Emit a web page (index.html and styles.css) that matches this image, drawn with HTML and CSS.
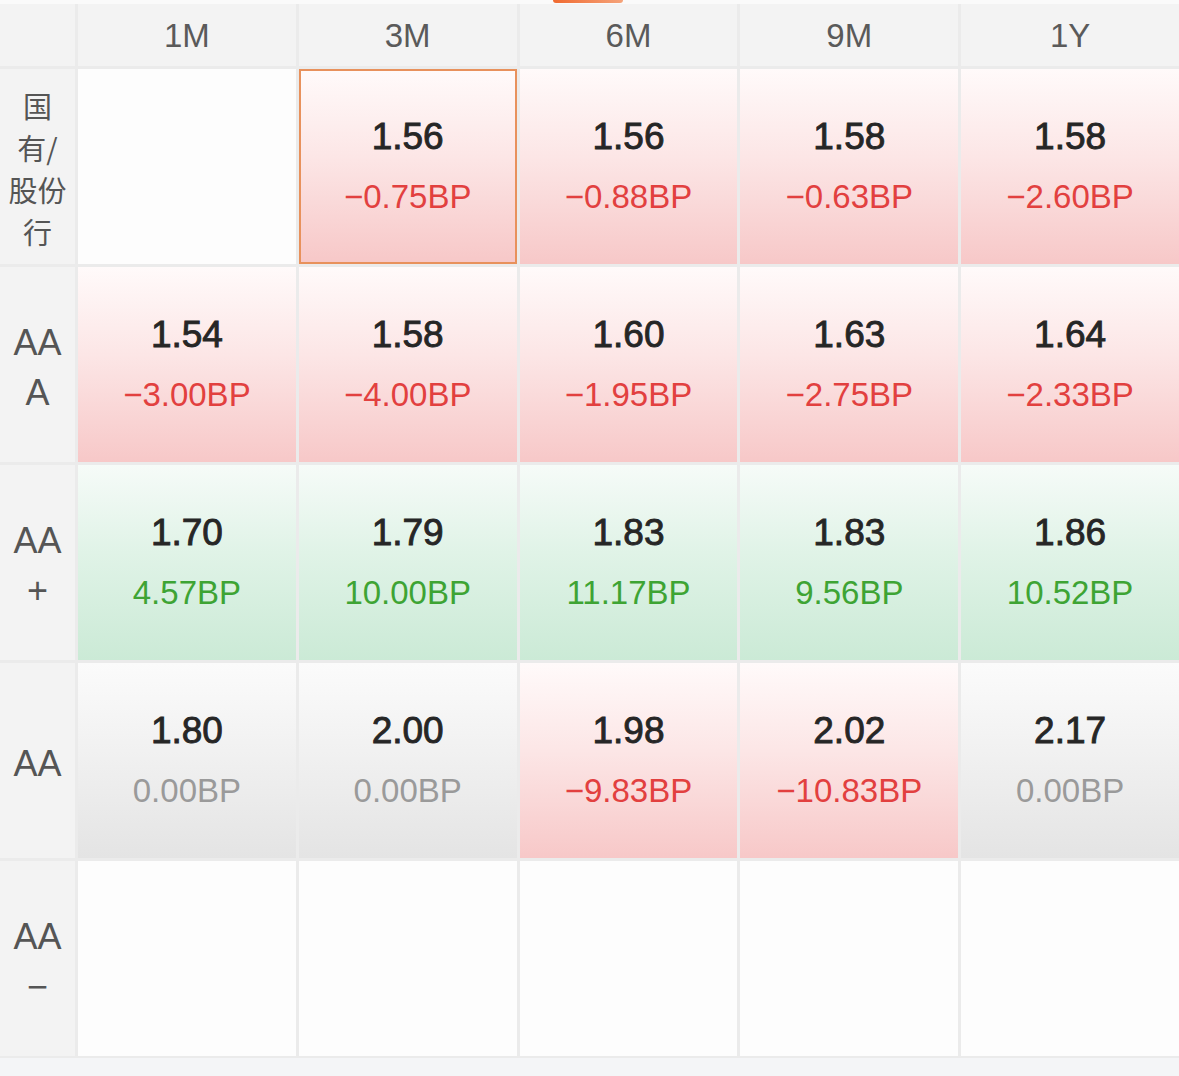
FILE: index.html
```html
<!DOCTYPE html>
<html lang="zh-CN">
<head>
<meta charset="utf-8">
<title>收益率矩阵</title>
<link rel="stylesheet" href="styles.css">
</head>
<body>
<div class="topbar"><div class="tab-ind"></div></div>
<div class="grid">
  <div class="corner"></div>
  <div class="head">1M</div>
  <div class="head">3M</div>
  <div class="head">6M</div>
  <div class="head">9M</div>
  <div class="head">1Y</div>

  <div class="label"><span class="lbl lbl-cn">国有/股份行</span></div>
  <div class="cell empty"></div>
  <div class="cell down selected"><div class="val">1.56</div><div class="chg">−0.75BP</div></div>
  <div class="cell down"><div class="val">1.56</div><div class="chg">−0.88BP</div></div>
  <div class="cell down"><div class="val">1.58</div><div class="chg">−0.63BP</div></div>
  <div class="cell down"><div class="val">1.58</div><div class="chg">−2.60BP</div></div>

  <div class="label"><span class="lbl">AAA</span></div>
  <div class="cell down"><div class="val">1.54</div><div class="chg">−3.00BP</div></div>
  <div class="cell down"><div class="val">1.58</div><div class="chg">−4.00BP</div></div>
  <div class="cell down"><div class="val">1.60</div><div class="chg">−1.95BP</div></div>
  <div class="cell down"><div class="val">1.63</div><div class="chg">−2.75BP</div></div>
  <div class="cell down"><div class="val">1.64</div><div class="chg">−2.33BP</div></div>

  <div class="label"><span class="lbl">AA+</span></div>
  <div class="cell up"><div class="val">1.70</div><div class="chg">4.57BP</div></div>
  <div class="cell up"><div class="val">1.79</div><div class="chg">10.00BP</div></div>
  <div class="cell up"><div class="val">1.83</div><div class="chg">11.17BP</div></div>
  <div class="cell up"><div class="val">1.83</div><div class="chg">9.56BP</div></div>
  <div class="cell up"><div class="val">1.86</div><div class="chg">10.52BP</div></div>

  <div class="label"><span class="lbl">AA</span></div>
  <div class="cell flat"><div class="val">1.80</div><div class="chg">0.00BP</div></div>
  <div class="cell flat"><div class="val">2.00</div><div class="chg">0.00BP</div></div>
  <div class="cell down"><div class="val">1.98</div><div class="chg">−9.83BP</div></div>
  <div class="cell down"><div class="val">2.02</div><div class="chg">−10.83BP</div></div>
  <div class="cell flat"><div class="val">2.17</div><div class="chg">0.00BP</div></div>

  <div class="label"><span class="lbl">AA−</span></div>
  <div class="cell empty"></div>
  <div class="cell empty"></div>
  <div class="cell empty"></div>
  <div class="cell empty"></div>
  <div class="cell empty"></div>
</div>
<div class="footer"></div>
</body>
</html>
```

FILE: styles.css
```css
html, body {
  margin: 0;
  padding: 0;
}
body {
  width: 1179px;
  height: 1076px;
  overflow: hidden;
  background: #f4f5f7;
  font-family: "Liberation Sans", Arial, "Noto Sans CJK SC", sans-serif;
}
.topbar {
  height: 4px;
  background: #fafafa;
  position: relative;
}
.tab-ind {
  position: absolute;
  left: 553px;
  top: 0;
  width: 70px;
  height: 3px;
  border-radius: 0 0 3px 3px;
  background: linear-gradient(90deg, #f06a30, #f5a37a);
}
.grid {
  display: grid;
  grid-template-columns: 75px repeat(5, 1fr);
  grid-template-rows: 62px repeat(5, 195px);
  gap: 3px;
  background: #ebebeb;
}
.corner, .head, .label {
  background: #f3f3f3;
}
.head {
  display: flex;
  align-items: center;
  justify-content: center;
  font-size: 33px;
  color: #5a5a5a;
  padding-top: 2px;
}
.label {
  display: flex;
  align-items: center;
  justify-content: center;
  color: #555;
}
.lbl {
  width: 62px;
  text-align: center;
  word-break: break-all;
  font-size: 36px;
  line-height: 50px;
  padding-top: 6px;
}
.lbl-cn {
  font-family: "Noto Sans CJK SC", sans-serif;
  font-size: 29px;
  line-height: 42px;
  width: 62px;
  word-break: normal;
  padding-top: 2px;
}
.cell {
  display: flex;
  flex-direction: column;
  align-items: center;
  justify-content: center;
  gap: 20px;
  box-sizing: border-box;
}
.empty {
  background: #fdfdfd;
}
.down {
  background: linear-gradient(180deg, #fffafa 0%, #fce6e6 45%, #f7c8c8 100%);
}
.up {
  background: linear-gradient(180deg, #f6fbf8 0%, #e0f3e7 45%, #cbead6 100%);
}
.flat {
  background: linear-gradient(180deg, #fbfbfb 0%, #f1f1f1 45%, #e4e4e4 100%);
}
.selected {
  border: 2px solid #e8915c;
}
.val {
  font-size: 37px;
  line-height: 40px;
  color: #262626;
  font-weight: 400;
  -webkit-text-stroke: 0.9px #262626;
}
.chg {
  font-size: 33px;
  line-height: 40px;
}
.down .chg { color: #e2403f; }
.up .chg { color: #3ea434; }
.flat .chg { color: #9a9a9a; }
.footer {
  height: 20px;
  border-top: 2px solid #ebebeb;
  background: #f4f5f7;
}
```
